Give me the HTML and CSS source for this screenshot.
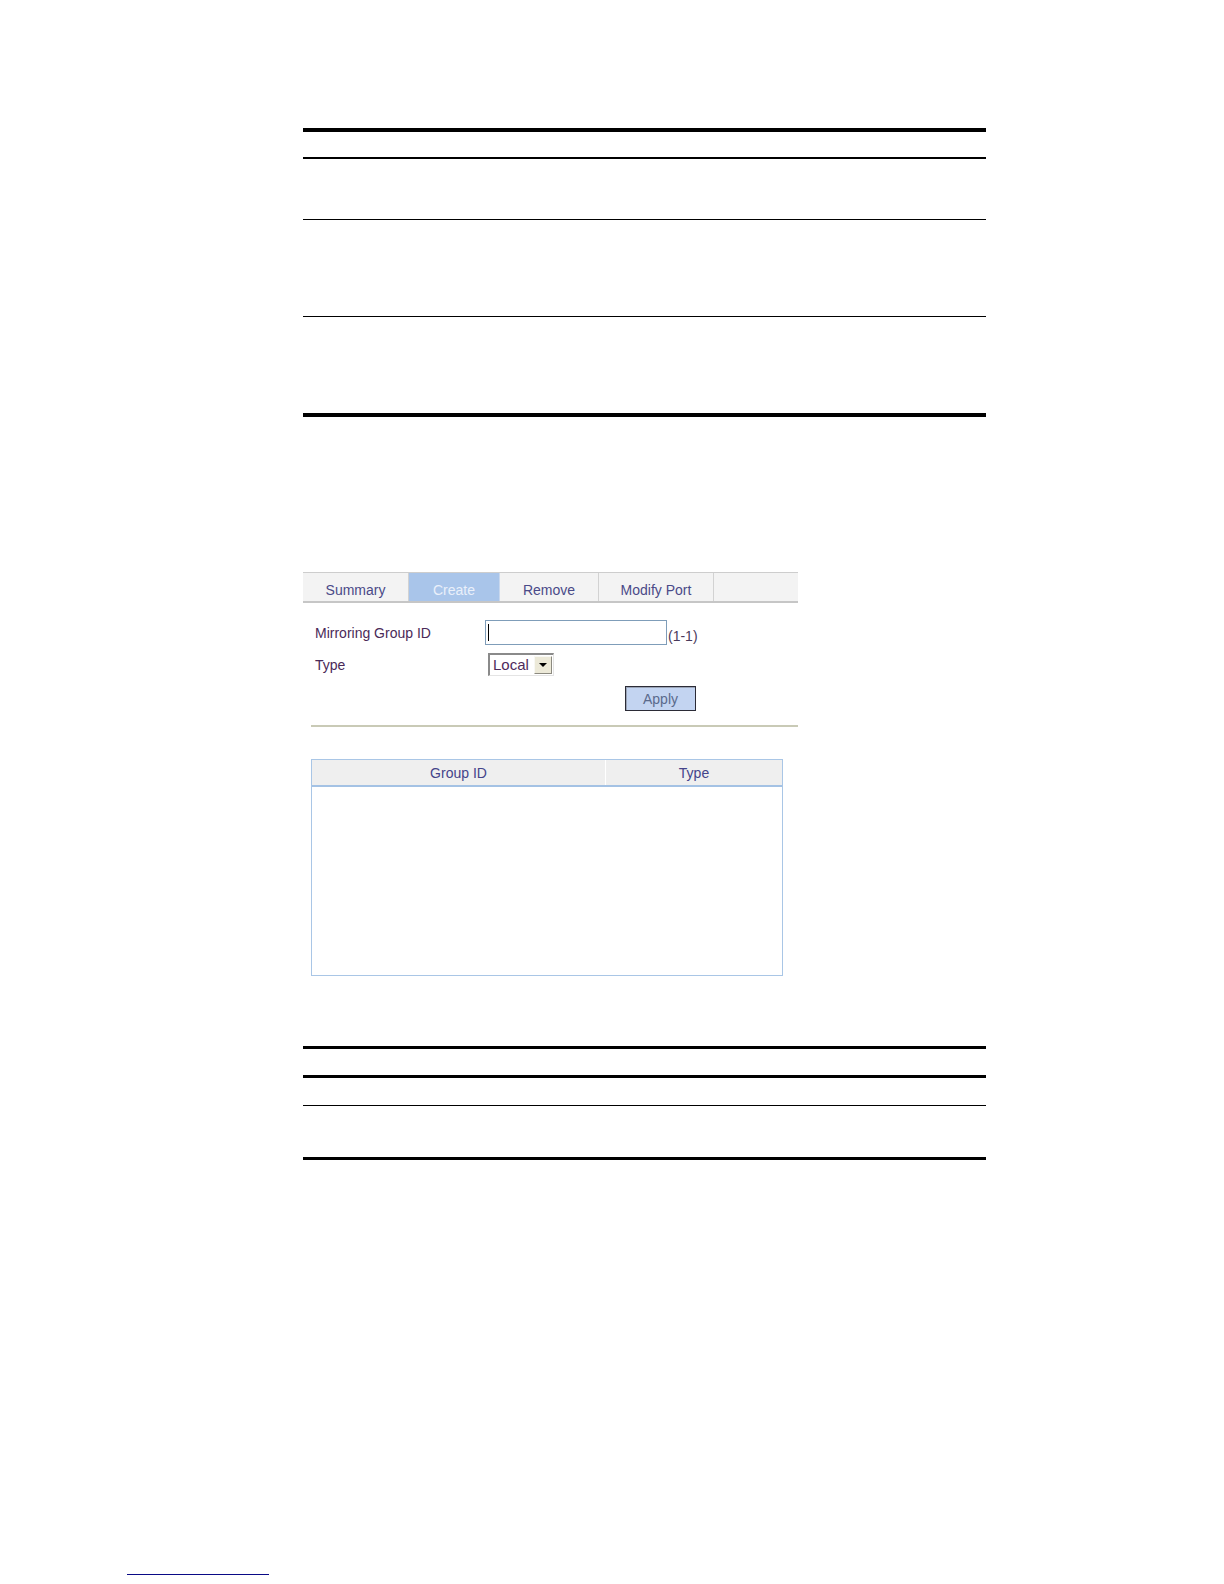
FILE: index.html
```html
<!DOCTYPE html>
<html lang="en">
<head>
<meta charset="utf-8">
<title>Mirroring Group - Create</title>
<link rel="stylesheet" href="styles.css">
</head>
<body>
<div class="page">
  <div class="doc-table t1">
    <div class="row r1"></div>
    <div class="row r2"></div>
    <div class="row r3"></div>
    <div class="row r4"></div>
  </div>

  <div class="panel">
    <div class="tabs">
      <div class="tab tab-summary">Summary</div>
      <div class="tab tab-create active">Create</div>
      <div class="tab tab-remove">Remove</div>
      <div class="tab tab-modify">Modify Port</div>
      <div class="tab tab-empty"></div>
    </div>

    <div class="form">
      <div class="form-row row-id">
        <span class="label">Mirroring Group ID</span>
        <div class="text-input"><span class="caret"></span></div>
        <span class="hint">(1-1)</span>
      </div>
      <div class="form-row row-type">
        <span class="label">Type</span>
        <div class="select">
          <span class="select-value">Local</span>
          <span class="select-btn"><span class="arrow"></span></span>
        </div>
      </div>
      <div class="form-row row-apply">
        <div class="btn-apply">Apply</div>
      </div>
    </div>

    <div class="separator"></div>

    <div class="grid">
      <div class="grid-head">
        <div class="col col-id">Group ID</div>
        <div class="col col-type">Type</div>
      </div>
      <div class="grid-body"></div>
    </div>
  </div>

  <div class="doc-table t2">
    <div class="row r1"></div>
    <div class="row r2"></div>
    <div class="row r3"></div>
  </div>
</div>
<div class="footer-link"></div>
</body>
</html>
```

FILE: styles.css
```css
html, body {
  margin: 0;
  padding: 0;
  background: #ffffff;
}

body {
  font-family: "Liberation Sans", Arial, sans-serif;
  font-size: 14px;
  color: #000;
}

.page {
  margin-left: 303px;
  width: 683px;
}

/* document rule tables */
.doc-table .row {
  box-sizing: content-box;
}

.t1 {
  margin-top: 128px;
  border-top: 4px solid #000;
}
.t1 .r1 { height: 25px; border-bottom: 2px solid #000; }
.t1 .r2 { height: 60px; border-bottom: 1px solid #000; }
.t1 .r3 { height: 96px; border-bottom: 1px solid #000; }
.t1 .r4 { height: 96px; border-bottom: 4px solid #000; }

.t2 {
  margin-top: 70px;
  border-top: 3px solid #000;
}
.t2 .r1 { height: 26px; border-bottom: 3px solid #000; }
.t2 .r2 { height: 27px; border-bottom: 1px solid #000; }
.t2 .r3 { height: 51px; border-bottom: 3px solid #000; }

/* web UI panel */
.panel {
  margin-top: 155px;
  width: 495px;
}

.tabs {
  display: flex;
  height: 28px;
  background: #f3f3f3;
  border-top: 1px solid #cdcdcd;
  border-bottom: 2px solid #c6c6c6;
}

.tab {
  box-sizing: border-box;
  height: 28px;
  padding-top: 7px;
  line-height: 20px;
  text-align: center;
  color: #4a4a88;
  border-right: 1px solid #d2d2d2;
}
.tab-summary { width: 106px; }
.tab-create { width: 91px; }
.tab-remove { width: 99px; }
.tab-modify { width: 115px; }
.tab-empty { flex: 1; border-right: none; }

.tab.active {
  background: #a9c5ea;
  color: #eaf0fa;
  border-right-color: #c9d8ee;
}

.form {
  padding-left: 12px;
  padding-top: 17px;
}

.form-row {
  display: flex;
  align-items: center;
}

.label {
  width: 170px;
  color: #4a2a58;
  line-height: 18px;
}

.text-input {
  position: relative;
  box-sizing: border-box;
  width: 182px;
  height: 25px;
  border: 1px solid #7f9db9;
  background: #fff;
}
.caret {
  position: absolute;
  left: 2px;
  top: 3px;
  width: 1px;
  height: 17px;
  background: #000;
}

.hint {
  align-self: flex-end;
  line-height: 18px;
  margin-left: 1px;
  color: #4a3a5c;
}

.row-type {
  margin-top: 8px;
}

.select {
  display: flex;
  align-items: center;
  box-sizing: border-box;
  width: 66px;
  height: 23px;
  margin-left: 3px;
  background: #fff;
  border-top: 2px solid #8a8a8a;
  border-left: 2px solid #8a8a8a;
  border-right: 1px solid #e4e4e4;
  border-bottom: 1px solid #e4e4e4;
}
.select-value {
  flex: 1;
  padding-left: 3px;
  line-height: 18px;
  font-size: 15px;
  color: #4e2a5c;
}
.select-btn {
  position: relative;
  box-sizing: border-box;
  width: 18px;
  height: 18px;
  margin-right: 1px;
  background: #ece9d8;
  border-top: 1px solid #f8f8f4;
  border-left: 1px solid #f8f8f4;
  border-right: 1px solid #8c8a80;
  border-bottom: 1px solid #8c8a80;
}
.arrow {
  position: absolute;
  left: 4px;
  top: 6px;
  width: 0;
  height: 0;
  border-left: 4px solid transparent;
  border-right: 4px solid transparent;
  border-top: 4px solid #000;
}

.row-apply {
  margin-top: 10px;
}

.btn-apply {
  box-sizing: border-box;
  width: 71px;
  height: 25px;
  margin-left: 310px;
  background: #c3d4f1;
  border: 1px solid #2b2b36;
  box-shadow: inset 1px 1px 0 #9aa4b6;
  text-align: center;
  line-height: 25px;
  color: #5a6a8c;
}

.separator {
  margin-top: 14px;
  margin-left: 8px;
  height: 2px;
  background: #c9cab6;
}

.grid {
  box-sizing: border-box;
  margin-top: 32px;
  margin-left: 8px;
  width: 472px;
  height: 217px;
  border: 1px solid #a9c6e6;
  background: #fff;
}

.grid-head {
  display: flex;
  height: 25px;
  background: #efefef;
  border-bottom: 2px solid #a4c2e4;
}

.col {
  box-sizing: border-box;
  padding-top: 3px;
  line-height: 20px;
  text-align: center;
  color: #44448a;
}
.col-id {
  width: 294px;
  border-right: 1px solid #ffffff;
}
.col-type {
  flex: 1;
}

.footer-link {
  margin-left: 127px;
  margin-top: 414px;
  width: 142px;
  height: 1px;
  background: #0a0a86;
}
```
